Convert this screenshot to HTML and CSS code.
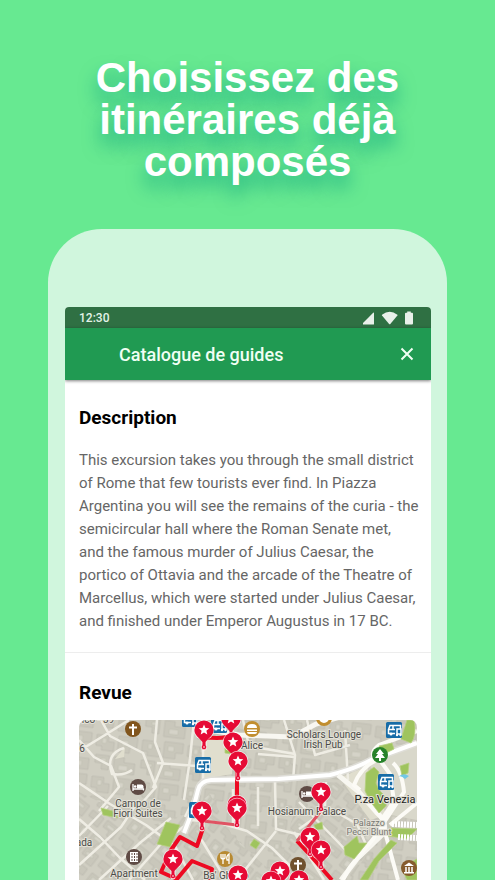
FILE: index.html
```html
<!DOCTYPE html>
<html lang="fr">
<head>
<meta charset="utf-8">
<meta name="viewport" content="width=device-width, initial-scale=1">
<title>Catalogue de guides</title>
<link rel="stylesheet" href="styles.css">
</head>
<body>
<main class="promo">
  <h1 class="headline">Choisissez des<br>itinéraires déjà<br>composés</h1>
  <div class="phone">
    <div class="screen">
      <div class="status">
        <span>12:30</span>
        <svg class="status-icons" viewBox="0 0 52 14" aria-hidden="true">
          <path d="M0 13.4V12L10.2 1.8Q11 1 11 2V13Q11 13.5 10.4 13.5H.6Z"/>
          <path d="M19 3.700Q26.700-2 34.400 3.700Q34.800 4 34.400 4.500L27.300 12.900Q26.700 13.400 26.100 12.900L19 4.500Q18.600 4 19 3.700Z"/>
          <path d="M43 1.800H44.200V.6H47.800V1.800H49Q50 1.800 50 2.800V12.500Q50 13.500 49 13.500H43Q42 13.500 42 12.500V2.800Q42 1.800 43 1.800Z"/>
        </svg>
      </div>
      <header class="appbar">
        <h2 class="appbar-title">Catalogue de guides</h2>
        <button class="close" type="button" aria-label="Fermer">
          <svg viewBox="0 0 14 14" aria-hidden="true"><path d="M1.500 1.500 12.500 12.500M12.500 1.500 1.500 12.500"/></svg>
        </button>
      </header>
      <section class="section description">
        <h3 class="section-title">Description</h3>
        <p class="copy">This excursion takes you through the small district<br>of Rome that few tourists ever find. In Piazza<br>Argentina you will see the remains of the curia - the<br>semicircular hall where the Roman Senate met,<br>and the famous murder of Julius Caesar, the<br>portico of Ottavia and the arcade of the Theatre of<br>Marcellus, which were started under Julius Caesar,<br>and finished under Emperor Augustus in 17 BC.</p>
      </section>
      <section class="section review">
        <h3 class="section-title">Revue</h3>
        <svg class="map" viewBox="79 720 338 160" preserveAspectRatio="xMidYMin slice" role="img" aria-label="Revue">
          <defs>
            <pattern id="blocks" width="46" height="42" patternUnits="userSpaceOnUse" patternTransform="rotate(7)">
              <rect width="46" height="42" fill="#d0cec2"/>
              <path d="M2 3H14V9H20V18H8V14H2ZM24 2H43V12H36V18H24ZM3 23H17V37H10V31H3ZM22 23H32V28H43V39H22Z" fill="#c9c7bb" stroke="#bbb9ad" stroke-width=".7"/>
              <path d="M8 6H12V11H8ZM28 6H34V11H28ZM9 26H14V29H9ZM27 31H36V36H27Z" fill="#d5d3c8" stroke="#bfbdb1" stroke-width=".6"/>
            </pattern>
            <pattern id="blocks-tilt" width="38" height="34" patternUnits="userSpaceOnUse" patternTransform="rotate(38)">
              <rect width="38" height="34" fill="#d0cec2"/>
              <path d="M2 3H16V14H9V10H2ZM20 2H35V15H28V10H20ZM2 19H13V31H2ZM17 19H34V27H26V32H17Z" fill="#c9c7bb" stroke="#bbb9ad" stroke-width=".7"/>
              <path d="M23 5H31V8H23ZM5 22H10V28H5ZM20 22H28V25H20Z" fill="#d6d4c9" stroke="#bfbdb1" stroke-width=".6"/>
            </pattern>
            <g id="pin">
              <path d="M0 11V18" stroke="#fff" stroke-width="5" stroke-linecap="round" opacity=".8"/>
              <circle r="10.300" fill="#fff" opacity=".7"/>
              <path d="M-9.600 0A9.600 9.600 0 1 1 9.600 0C9.600 5.500 4 8.500 1.500 12V15H-1.500V12C-4 8.500-9.600 5.500-9.600 0Z" fill="#e60b35"/>
              <circle cy="17" r="2.300" fill="#e60b35"/><circle cy="17" r=".8" fill="#fff"/>
              <path d="M0-5.500 1.500-2 5.300-1.700 2.400.8 3.300 4.500 0 2.500-3.300 4.500-2.400.8-5.300-1.700-1.500-2Z" fill="#fff"/>
            </g>
            <g id="bus">
              <rect x="-8" y="-8" width="16" height="16" rx="1.500" fill="#176ca7"/>
              <path d="M1 3.500H-5.500V-.5L-4-4.500H6.500V-1M-5.500-.5H1M-1-4.500V-.5M3-1H7V4H3Z" fill="none" stroke="#fff" stroke-width="1.500"/>
              <circle cx="-3" cy="4" r="1.500" fill="#fff"/><circle cx="3" cy="5" r="1.200" fill="#fff"/><circle cx="6.500" cy="5" r="1.200" fill="#fff"/>
            </g>
            <g id="hotel">
              <circle r="8" fill="#5f4b45"/>
              <path d="M-5-3V4M-5 2H5.500V3.500" fill="none" stroke="#fff" stroke-width="1.300"/><path d="M-1-2.500H3.500Q5.500-2.500 5.500-.5V1.500H-1Z" fill="#fff"/><circle cx="-2.800" cy="-.5" r="1.300" fill="#fff"/>
            </g>
          </defs>

          <rect x="79" y="720" width="338" height="160" fill="url(#blocks)"/>
          <path d="M79 792 112 808 150 826 186 814 210 794 232 835 280 880H79ZM300 790 338 782 385 826 350 880H276Z" fill="url(#blocks-tilt)"/>
          <path d="M203 737H232V774L203 779ZM340 778 367 766 374 790 387 815 370 820ZM115 759 125 747 124 757Z" fill="#e0dece"/>
          <path d="M369 763 417 745V820L391 815Z" fill="#d9d8cb"/>

          <g fill="none" stroke="#efede4" stroke-width="2.500" stroke-linejoin="round">
            <path d="M79 751 105 735 129 720M101 720 110 736 143 753 156 787 142 803M157 720 155 742 163 763 153 788M79 740 94 757 111 766 119 787 99 811M124 748Q105 754 112 774Q124 776 132 770M79 783 110 804 146 825 175 846 193 880M79 836 108 806M79 865 121 827 139 800M99 880 141 842 171 818M157 763 197 766M194 720 190 759 184 800M203 723V779L185 817M79 819 100 837 120 858 145 880M129 880 160 845 192 820 220 823 247 831 272 848 292 868"/>
            <path d="M243 720 249 746 295 754M284 720 295 755 293 781M258 787 258 826M233 789 233 824M275 782 276 829 301 835M258 754 295 757M307 720 315 755 350 745M345 730 348 780M299 829 329 808 357 824 367 847M294 832 324 880M201 839 226 880M237 880 276 831M299 802 338 842 349 854M326 782 325 806"/>
          </g>
          <path d="M184 833Q194 808 198 790Q200 781 211 780L278 779 330 775Q355 769 373 759L417 743" fill="none" stroke="#dfded8" stroke-width="7"/>
          <path d="M184 833Q194 808 198 790Q200 781 211 780L278 779 330 775Q355 769 373 759L417 743" fill="none" stroke="#fff" stroke-width="4"/>
          <path d="M203 729 239 735 292 737 316 724 347 715M338 775 359 792 377 813Q387 820 384 833L357 859 341 880" fill="none" stroke="#f8f7f1" stroke-width="5"/>
          <path d="M360 790 354 785Q361 766 379 759L390 774 394 801 382 819 373 808 366 798M375 759Q369 753 379 745L417 731M393 763Q402 771 404 792L389 815 373 839 350 867 343 880M390 825 417 803M382 821 398 880" fill="none" stroke="#fcfbf6" stroke-width="4"/>

          <g fill="#9fc45e" stroke="#b6cf82" stroke-width=".8">
            <path d="M366 773 374 767 379 772 376 783 379 790 386 797 386 806 379 813 370 801 365 791Z"/>
            <path d="M166 822 180 825 170 847 157 844Z"/>
            <path d="M344 847 357 836 359 843 367 843 354 859 345 855Z"/>
            <path d="M389 828 417 829 407 839 388 836ZM391 840 397 843 379 861 368 880H360L374 859Z"/>
            <path d="M407 720H414Q417 735 411 743L401 739ZM379 746 392 743 394 749 382 755ZM400 766 409 763 408 773 402 776Z"/>
            <path d="M225 748 232 743 232 754 225 753ZM254 839 260 843 256 849 250 845ZM314 825 322 822 323 829 316 830ZM401 867 417 859V880H407ZM101 808 113 811 118 818 103 815Z"/>
          </g>
          <path d="M398 777Q403 772 409 776L405 779Q401 775 398 777Z" fill="#72c8e6"/>
          <path d="M392 824 417 825M398 837 417 838" stroke="#fff" stroke-width="6" stroke-dasharray="2 1"/>

          <g fill="none" stroke="#ed0a22" stroke-width="4" stroke-linejoin="round">
            <path d="M204 750V737Q225 740 235 734M237 766V807M203 828 197 846 180 837 171 850 161 872 177 879 192 861 212 869 210 880M297 841 310 855 332 880"/>
            <path d="M203 821 237 825M321 811 297 841" stroke="#df5363" stroke-width="3"/>
          </g>

          <g class="label" text-anchor="middle">
            <text x="98" y="723">ico - 39</text><text x="82" y="752">6</text>
            <text x="138" y="807">Campo de</text><text x="138" y="817">Fiori Suites</text>
            <text x="84" y="846">ada</text><text x="134" y="877">Apartment</text>
            <text x="252" y="749">Alice</text><text x="324" y="738">Scholars Lounge</text><text x="323" y="748">Irish Pub</text>
            <text x="307" y="815">Hosianum Palace</text><text x="226" y="879">Ba' Ghetto</text>
            <text class="place" x="385" y="803">P.za Venezia</text>
            <text class="muted" x="369" y="826">Palazzo</text><text class="muted" x="369" y="835">Pecci Blunt</text>
          </g>

          <use href="#bus" x="190" y="719"/><use href="#bus" x="219" y="725"/><use href="#bus" x="203" y="765"/><use href="#bus" x="197" y="810"/><use href="#bus" x="394" y="730"/><use href="#bus" x="386" y="782"/>
          <use href="#hotel" x="138" y="787"/><use href="#hotel" x="307" y="794"/>
          <circle cx="133" cy="729" r="8" fill="#81551d"/><path d="M133 724V735M129 727.500H137" stroke="#fff" stroke-width="2"/>
          <circle cx="134" cy="857" r="8" fill="#5f4b45"/><path d="M130 852H138V862H130Z" fill="#fff"/><path d="M132 853V862M134.500 853V862M137 853V862" stroke="#5f4b45" stroke-dasharray="2 1"/>
          <circle cx="252" cy="729" r="8" fill="#c18e2f"/><path d="M247 728Q247 724 252 724Q257 724 257 728ZM247 729.500H257V731H247ZM247 732H257Q257 734 255 734H249Q247 734 247 732Z" fill="#fff"/>
          <circle cx="324" cy="718" r="6.500" fill="#fff" stroke="#c18e2f" stroke-width="3"/>
          <circle cx="225" cy="859" r="8" fill="#b88a32"/><path d="M221 854V858Q223 860 225 858V854M223 854V864M229 864V854Q226 856 227 860H229" fill="none" stroke="#fff" stroke-width="1.300"/>
          <circle cx="380" cy="755" r="8" fill="#27822a"/><path d="M380 749 384 754H382L385 758H381V761H379V758H375L378 754H376Z" fill="#fff"/>
          <circle cx="409" cy="868" r="8" fill="#865b2d"/><path d="M404 866 409 862.500 414 866ZM404 872H414V873.500H404Z" fill="#fff"/><path d="M406 867V872M409 867V872M412 867V872" stroke="#fff" stroke-width="1.500"/>
          <circle cx="298" cy="865" r="8" fill="#70512e"/><path d="M298 860V870M294 863.500H302" stroke="#fff" stroke-width="2"/>

          <use href="#pin" x="231" y="719"/><use href="#pin" x="204" y="730"/><use href="#pin" x="233" y="742"/><use href="#pin" x="238" y="761"/>
          <use href="#pin" x="237" y="805"/><use href="#pin" x="237" y="808"/><use href="#pin" x="202" y="811"/><use href="#pin" x="321" y="792"/>
          <use href="#pin" x="310" y="837"/><use href="#pin" x="321" y="850"/><use href="#pin" x="173" y="859"/><use href="#pin" x="280" y="871"/>
          <use href="#pin" x="238" y="875"/><use href="#pin" x="271" y="881"/><use href="#pin" x="299" y="880"/>
        </svg>
      </section>
    </div>
  </div>
</main>
</body>
</html>
```

FILE: styles.css
```css
* {
  box-sizing: border-box;
}

body {
  margin: 0;
  background: #67e991;
  font-family: Roboto, "Liberation Sans", sans-serif;
}

h1,
h2,
h3,
p {
  margin: 0;
}

.promo {
  display: flex;
  flex-direction: column;
  height: 100vh;
  min-height: 640px;
  padding-top: 57px;
  overflow: hidden;
}

.headline {
  color: #fff;
  font: 700 42px/42px "Liberation Sans", Arial, sans-serif;
  text-align: center;
  text-shadow: 0 12px 18px rgba(0, 155, 125, 0.75);
}

.phone {
  flex: 1;
  display: flex;
  min-height: 0;
  margin: 46px 48px 0;
  padding: 78px 16px 0 17px;
  border-radius: 54px 54px 0 0;
  background: #d0f6dd;
}

.screen {
  flex: 1;
  min-width: 0;
  border-radius: 4px 4px 0 0;
  background: #fff;
  overflow: hidden;
}

.status {
  display: flex;
  align-items: center;
  justify-content: space-between;
  height: 21px;
  padding: 0 16px 0 14px;
  background: #2f7043;
  color: #e4f3e8;
  font-size: 12px;
  font-weight: 500;
}

.status-icons {
  width: 52px;
  height: 14px;
  fill: #e9f0ea;
}

.appbar {
  display: flex;
  align-items: center;
  justify-content: space-between;
  height: 52px;
  padding: 0 12px 0 54px;
  background: #209a52;
  color: #f0fff4;
  box-shadow: 0 1px 3px rgba(0, 0, 0, 0.5);
}

.appbar-title {
  font-size: 18px;
  font-weight: 500;
}

.close {
  display: grid;
  place-items: center;
  width: 24px;
  height: 24px;
  padding: 0;
  border: 0;
  background: none;
  color: inherit;
}

.close svg {
  width: 14px;
  height: 14px;
  fill: none;
  stroke: currentColor;
  stroke-width: 2;
}

.section {
  padding: 28px 14px 0;
}

.description {
  padding: 26px 0 19px 14px;
  border-bottom: 1px solid #ededed;
}

.section-title {
  color: #000;
  font-size: 19px;
  font-weight: 700;
  line-height: 24px;
}

.copy {
  margin-top: 19px;
  color: #666;
  font-size: 15px;
  line-height: 23px;
}

.map {
  display: block;
  width: 100%;
  margin-top: 15px;
  border-radius: 7px 7px 0 0;
}

.label {
  fill: #4b4b48;
  stroke: #e4e2d8;
  stroke-width: 2px;
  stroke-linejoin: round;
  paint-order: stroke;
  font-size: 10px;
}

.label .place {
  fill: #222;
  font-size: 11px;
}

.label .muted {
  fill: #777771;
  font-size: 9px;
}
```
